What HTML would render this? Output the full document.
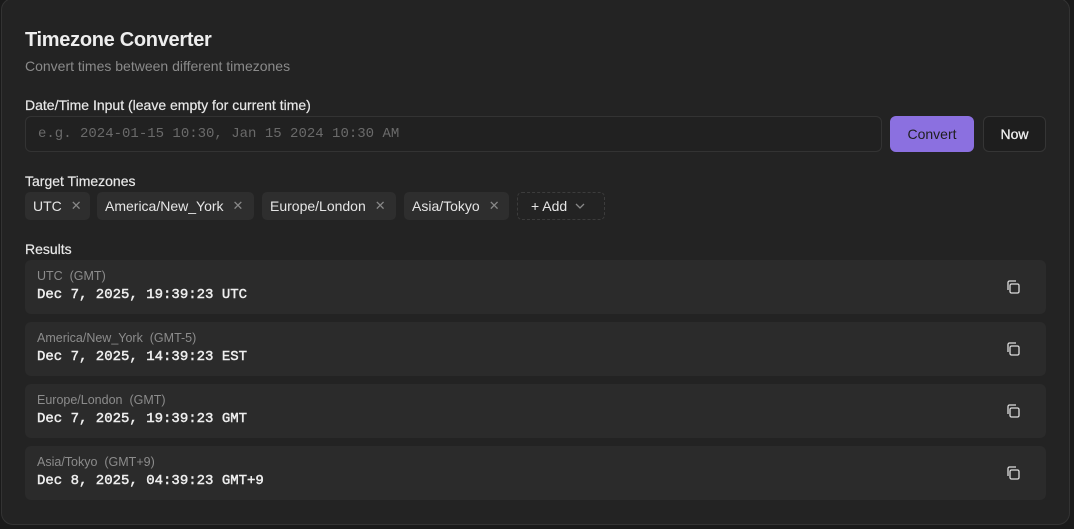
<!DOCTYPE html>
<html><head><meta charset="utf-8"><style>
*{box-sizing:border-box;margin:0;padding:0}
body{width:1074px;height:529px;background:#1a1a1a;font-family:"Liberation Sans",sans-serif;color:#ececec;overflow:hidden;position:relative}
.card{position:absolute;left:1px;top:-2px;width:1069px;height:527px;background:#232323;border:1px solid #333;border-radius:12px}
.a{position:absolute}
h1{position:absolute;left:25px;top:29px;font-size:20px;font-weight:bold;letter-spacing:-0.3px;color:#eee}
.sub{left:25px;top:58px;font-size:14px;color:#8a8a8a}
.lbl{font-size:14px;color:#e8e8e8;-webkit-text-stroke:0.2px #e8e8e8}
.input{left:25px;top:116px;width:857px;height:36px;border:1px solid #333;border-radius:6px;background:#212121;font-family:"Liberation Mono",monospace;font-size:14px;color:#6a6a6a;padding:9px 12px}
.btn{top:116px;height:36px;border-radius:6px;font-size:14px;display:flex;align-items:center;justify-content:center}
.chip{top:192px;height:28px;background:#2e2e2e;border-radius:5px;font-size:14px;display:flex;align-items:center;padding-left:8px;color:#e5e5e5}
.chip span{color:#888;margin-left:9px;font-size:13px}
.row{left:25px;width:1021px;height:54px;background:#2b2b2b;border-radius:6px}
.row .t{position:absolute;left:12px;top:9px;font-size:12.5px;color:#8c8c8c}
.row .v{position:absolute;left:12px;top:27px;font-family:"Liberation Mono",monospace;font-size:14px;color:#eee;-webkit-text-stroke:0.45px #eee}
.row svg{position:absolute;left:980px;top:19px}
</style></head><body>
<div class="card"></div>
<h1>Timezone Converter</h1>
<div class="a sub">Convert times between different timezones</div>
<div class="a lbl" style="left:25px;top:97px">Date/Time Input (leave empty for current time)</div>
<div class="a input">e.g. 2024-01-15 10:30, Jan 15 2024 10:30 AM</div>
<div class="a btn" style="left:890px;width:84px;background:#8b70e0;color:#1e1e1e">Convert</div>
<div class="a btn" style="left:983px;width:63px;background:#1e1e1e;border:1px solid #353535;color:#eee;-webkit-text-stroke:0.3px #eee">Now</div>
<div class="a lbl" style="left:25px;top:173px">Target Timezones</div>
<div class="a chip" style="left:25px;width:65px">UTC<span>✕</span></div>
<div class="a chip" style="left:97px;width:157px">America/New_York<span>✕</span></div>
<div class="a chip" style="left:262px;width:134px">Europe/London<span>✕</span></div>
<div class="a chip" style="left:404px;width:105px">Asia/Tokyo<span>✕</span></div>
<div class="a chip" style="left:517px;width:88px;background:none;border:1px dashed #3c3c3c;padding-left:13px">+ Add<svg style="margin-left:8px" width="10" height="6" viewBox="0 0 10 6"><path d="M1 1l4 4 4-4" stroke="#888" stroke-width="1.3" fill="none"/></svg></div>
<div class="a lbl" style="left:25px;top:241px">Results</div>
<div class="a row" style="top:260px"><div class="t">UTC&nbsp; (GMT)</div><div class="v">Dec 7, 2025, 19:39:23 UTC</div><svg width="16" height="16" viewBox="0 0 16 16" fill="none" stroke="#ddd" stroke-width="1.3"><rect x="5" y="5" width="9" height="9" rx="1.5"/><path d="M3 11V3.5A1.5 1.5 0 0 1 4.5 2H11"/></svg></div>
<div class="a row" style="top:322px"><div class="t">America/New_York&nbsp; (GMT-5)</div><div class="v">Dec 7, 2025, 14:39:23 EST</div><svg width="16" height="16" viewBox="0 0 16 16" fill="none" stroke="#ddd" stroke-width="1.3"><rect x="5" y="5" width="9" height="9" rx="1.5"/><path d="M3 11V3.5A1.5 1.5 0 0 1 4.5 2H11"/></svg></div>
<div class="a row" style="top:384px"><div class="t">Europe/London&nbsp; (GMT)</div><div class="v">Dec 7, 2025, 19:39:23 GMT</div><svg width="16" height="16" viewBox="0 0 16 16" fill="none" stroke="#ddd" stroke-width="1.3"><rect x="5" y="5" width="9" height="9" rx="1.5"/><path d="M3 11V3.5A1.5 1.5 0 0 1 4.5 2H11"/></svg></div>
<div class="a row" style="top:446px"><div class="t">Asia/Tokyo&nbsp; (GMT+9)</div><div class="v">Dec 8, 2025, 04:39:23 GMT+9</div><svg width="16" height="16" viewBox="0 0 16 16" fill="none" stroke="#ddd" stroke-width="1.3"><rect x="5" y="5" width="9" height="9" rx="1.5"/><path d="M3 11V3.5A1.5 1.5 0 0 1 4.5 2H11"/></svg></div>
</body></html>
